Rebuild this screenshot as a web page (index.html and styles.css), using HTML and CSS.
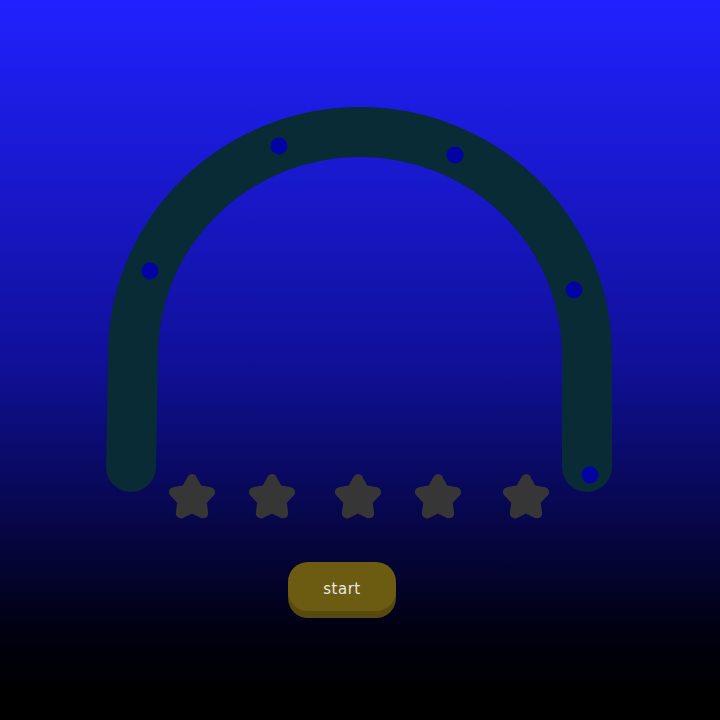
FILE: index.html
```html
<!DOCTYPE html>
<html>
<head>
<meta charset="utf-8">
<link rel="stylesheet" href="styles.css">
</head>
<body>
<main class="screen">
  <svg class="board" width="720" height="530" viewBox="0 0 720 530">
    <defs>
      <polygon id="star" points="0,-19 5.88,-8.09 18.07,-5.87 9.51,3.09 11.17,15.37 0,10 -11.17,15.37 -9.51,3.09 -18.07,-5.87 -5.88,-8.09"/>
    </defs>
    <path class="track" d="M131 467 L133 355 A227 223 0 0 1 587 355 L587 467"/>
    <g class="dots">
      <circle cx="150" cy="271" r="8.5"/>
      <circle cx="279" cy="146" r="8.5"/>
      <circle cx="455" cy="155" r="8.5"/>
      <circle cx="574" cy="290" r="8.5"/>
      <circle cx="590" cy="475" r="8.5"/>
    </g>
    <g class="stars">
      <use href="#star" x="192" y="498"/>
      <use href="#star" x="272" y="498"/>
      <use href="#star" x="358" y="498"/>
      <use href="#star" x="438" y="498"/>
      <use href="#star" x="526" y="498"/>
    </g>
  </svg>
  <div class="controls">
    <button class="start">start</button>
  </div>
</main>
</body>
</html>
```

FILE: styles.css
```css
html, body {
  margin: 0;
  padding: 0;
  height: 100%;
}
body {
  background: linear-gradient(to bottom, #2121ff 0%, #10109a 50%, #000010 88%, #000000 97%);
  font-family: "DejaVu Sans", Verdana, sans-serif;
  overflow: hidden;
}
.screen {
  width: 720px;
  height: 720px;
  display: flex;
  flex-direction: column;
}
.board {
  display: block;
}
.track {
  fill: none;
  stroke: #082b36;
  stroke-width: 50;
  stroke-linecap: round;
  stroke-linejoin: round;
}
.dots circle {
  fill: #0303a3;
}
.stars use {
  fill: #363636;
  stroke: #363636;
  stroke-width: 10;
  stroke-linejoin: round;
}
.controls {
  display: flex;
  justify-content: center;
  padding-top: 32px;
}
.start {
  margin-right: 36px;
  width: 108px;
  height: 49px;
  border: none;
  border-radius: 20px;
  background: #6c5c12;
  box-shadow: 0 7px 0 #584a0e;
  color: #e6e6e6;
  font-family: "DejaVu Sans", Verdana, sans-serif;
  font-size: 15px;
  letter-spacing: 0.5px;
  padding: 4px 0 0 0;
}
```
